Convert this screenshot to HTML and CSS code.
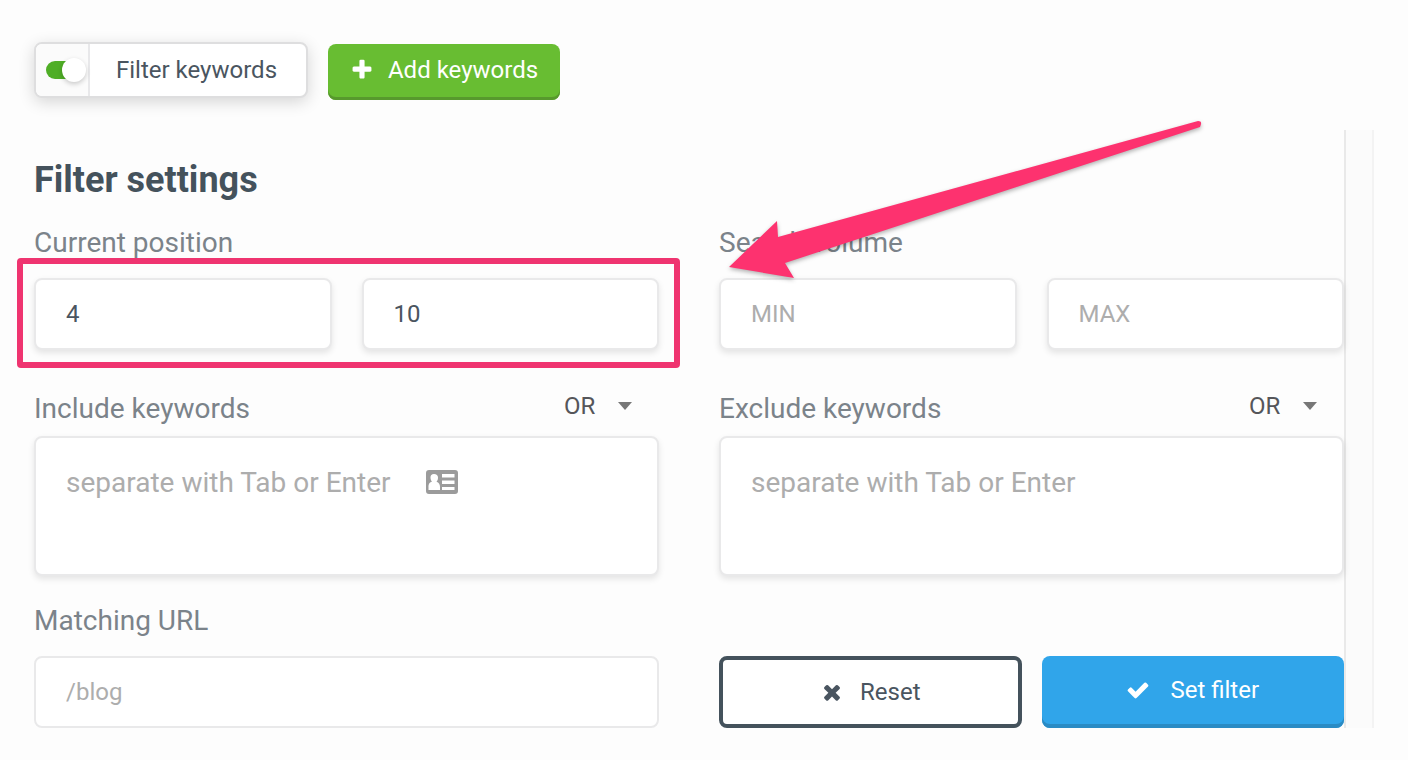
FILE: index.html
```
<!DOCTYPE html>
<html lang="en">
<head>
    <meta charset="UTF-8">
    <meta name="viewport" content="width=device-width, initial-scale=1">
    <title>Filter keywords</title>
    <link rel="stylesheet" href="styles.css">
</head>
<body>
    <div class="toolbar">
        <label class="toggle">
            <span class="toggle-cell"><input type="checkbox" class="switch" checked></span>
            <span class="toggle-text">Filter keywords</span>
        </label>
        <button type="button" class="btn btn-add">
            <svg class="icon" viewBox="0 0 1792 1792"><path d="M1600 736v192q0 40-28 68t-68 28h-416v416q0 40-28 68t-68 28h-192q-40 0-68-28t-28-68v-416h-416q-40 0-68-28t-28-68v-192q0-40 28-68t68-28h416v-416q0-40 28-68t68-28h192q40 0 68 28t28 68v416h416q40 0 68 28t28 68z"/></svg>
            Add keywords
        </button>
    </div>

    <div class="content">
        <form class="filter">
            <h2>Filter settings</h2>

            <div class="row">
                <div class="field">
                    <label for="posMin">Current position</label>
                    <div class="pair marked">
                        <input type="text" id="posMin" value="4">
                        <input type="text" id="posMax" value="10" aria-label="Current position to">
                    </div>
                </div>
                <div class="field">
                    <label for="volMin">Search volume</label>
                    <div class="pair">
                        <input type="text" id="volMin" placeholder="MIN">
                        <input type="text" id="volMax" placeholder="MAX" aria-label="Search volume to">
                    </div>
                    <svg class="arrow" viewBox="0 0 480 164" width="480" height="164"><path d="M4 149L52 103L53 119L473 3Q478 3 475 9L60 145L69 160Z"/></svg>
                </div>
            </div>

            <div class="row row-keywords">
                <div class="field">
                    <div class="field-head">
                        <label for="include">Include keywords</label>
                        <div class="mode">
                            <select aria-label="Include mode"><option>OR</option><option>AND</option></select>
                            <svg class="caret" viewBox="0 0 14 8"><path d="M0 0h14L7 8z"/></svg>
                        </div>
                    </div>
                    <div class="tags">
                        <textarea id="include" placeholder="separate with Tab or Enter"></textarea>
                        <svg class="card" viewBox="0 0 32 24">
                            <path fill-rule="evenodd" d="M3 0h26a3 3 0 0 1 3 3v18a3 3 0 0 1-3 3H3a3 3 0 0 1-3-3V3a3 3 0 0 1 3-3zM8 4C5.500 4 4.500 5.500 4.500 7.500c0 2 .8 3.500 1.500 4.200C3 12.500 2.500 14.500 2.500 17v3h11.500V17c0-2.500-1-4.500-3.500-5.300.9-.7 1.500-2.200 1.500-4.200C12 5.500 10.500 4 8 4zM16 4v3.500h12.500V4zM16 10.500V14h12.500v-3.500zM16 17v3h12.500V17z"/>
                        </svg>
                    </div>
                </div>
                <div class="field">
                    <div class="field-head">
                        <label for="exclude">Exclude keywords</label>
                        <div class="mode">
                            <select aria-label="Exclude mode"><option>OR</option><option>AND</option></select>
                            <svg class="caret" viewBox="0 0 14 8"><path d="M0 0h14L7 8z"/></svg>
                        </div>
                    </div>
                    <div class="tags">
                        <textarea id="exclude" placeholder="separate with Tab or Enter"></textarea>
                    </div>
                </div>
            </div>

            <div class="row row-last">
                <div class="field">
                    <label for="url">Matching URL</label>
                    <input type="text" id="url" class="flat" placeholder="/blog">
                </div>
                <div class="actions">
                    <button type="reset" class="btn btn-reset">
                        <svg class="icon" viewBox="0 0 1792 1792"><path d="M1490 1322q0 40-28 68l-136 136q-28 28-68 28t-68-28l-294-294-294 294q-28 28-68 28t-68-28l-136-136q-28-28-28-68t28-68l294-294-294-294q-28-28-28-68t28-68l136-136q28-28 68-28t68 28l294 294 294-294q28-28 68-28t68 28l136 136q28 28 28 68t-28 68l-294 294 294 294q28 28 28 68z"/></svg>
                        Reset
                    </button>
                    <button type="button" class="btn btn-set">
                        <svg class="icon" viewBox="0 0 1792 1792"><path d="M1671 566q0 40-28 68l-724 724-136 136q-28 28-68 28t-68-28l-136-136-362-362q-28-28-28-68t28-68l136-136q28-28 68-28t68 28l294 295 656-657q28-28 68-28t68 28l136 136q28 28 28 68z"/></svg>
                        Set filter
                    </button>
                </div>
            </div>
        </form>
        <div class="gutter"></div>
    </div>
</body>
</html>
```
FILE: styles.css
```
* {
    box-sizing: border-box;
}
body {
    margin: 0;
    padding: 42px 34px 32px;
    background: #fdfdfd;
    color: #4a5560;
    font-family: Roboto, "Liberation Sans", sans-serif;
    font-size: 24px;
}
input,
select,
textarea,
button {
    font: inherit;
    color: inherit;
}

/* toolbar */
.toolbar {
    display: flex;
    gap: 20px;
    height: 58px;
}
.toggle {
    display: flex;
    width: 274px;
    height: 56px;
    border: 2px solid #dededf;
    border-radius: 8px;
    background: #fff;
    box-shadow: 0 4px 16px rgba(0, 0, 0, 0.16);
    overflow: hidden;
    cursor: pointer;
}
.toggle-cell {
    display: flex;
    align-items: center;
    width: 54px;
    padding-left: 10px;
    background: #fbfbfb;
    border-right: 2px solid #e8e8ea;
}
.toggle-text {
    padding-left: 26px;
    line-height: 52px;
}
.switch {
    appearance: none;
    position: relative;
    width: 36px;
    height: 18px;
    margin: 0;
    border-radius: 9px;
    background: #ccc;
}
.switch:checked {
    background: #4fae26;
}
.switch::before {
    content: "";
    position: absolute;
    top: -3px;
    left: -4px;
    width: 24px;
    height: 24px;
    border-radius: 50%;
    background: #fff;
    box-shadow: 0 2px 5px rgba(0, 0, 0, 0.2);
}
.switch:checked::before {
    left: 16px;
}

/* buttons */
.btn {
    display: flex;
    align-items: center;
    justify-content: center;
    gap: 16px;
    padding: 0;
    border: 0;
    border-radius: 8px;
    cursor: pointer;
}
.icon {
    width: 24px;
    height: 24px;
    fill: currentColor;
}
.btn-add {
    align-self: flex-end;
    width: 232px;
    height: 56px;
    padding-bottom: 4px;
    gap: 14px;
    background: #68bd32;
    color: #fff;
    box-shadow: inset 0 -3px 0 #57992d;
}

/* filter */
.content {
    display: flex;
    margin-top: 30px;
}
.filter {
    flex: 1;
    padding-top: 30px;
}
.gutter {
    width: 30px;
    background: #fbfbfb;
    border-left: 2px solid #e9e9e9;
    border-right: 2px solid #f3f3f3;
}
h2 {
    margin: 0 0 24px;
    color: #44525c;
    font-size: 36px;
    line-height: 40px;
    font-weight: 700;
}
.row {
    display: grid;
    grid-template-columns: 1fr 1fr;
    gap: 60px;
}
.row-keywords {
    margin-top: 40px;
}
.row-last {
    margin-top: 26px;
}
.field {
    position: relative;
}
.field label {
    display: block;
    margin-bottom: 16px;
    font-size: 28px;
    line-height: 38px;
    color: #7b838a;
}
.pair {
    display: grid;
    grid-template-columns: 1fr 1fr;
    gap: 30px;
    position: relative;
}
.field input,
.field textarea {
    display: block;
    width: 100%;
    height: 72px;
    padding: 0 30px;
    border: 2px solid #e9e9ea;
    border-radius: 8px;
    background: #fff;
    box-shadow: 0 3px 6px rgba(0, 0, 0, 0.1);
    outline: 0;
}
.field textarea {
    height: 140px;
    padding: 26px 30px;
    font-size: 28px;
    line-height: 38px;
    resize: none;
}
.field .flat {
    box-shadow: none;
}
::placeholder {
    color: #adadad;
    opacity: 1;
}
.field-head {
    display: flex;
    justify-content: space-between;
    margin-bottom: 8px;
}
.field-head label {
    margin: 0;
}
.mode {
    position: relative;
    height: 32px;
    margin-right: 27px;
}
.mode select {
    appearance: none;
    width: 68px;
    height: 32px;
    padding: 0;
    border: 0;
    background: none;
    color: #55565a;
}
.caret {
    position: absolute;
    top: 12px;
    right: 0;
    width: 14px;
    height: 8px;
    fill: #777;
    pointer-events: none;
}
.tags {
    position: relative;
}
.card {
    position: absolute;
    top: 34px;
    left: 392px;
    width: 32px;
    height: 24px;
    fill: #9b9b9b;
}
.actions {
    display: grid;
    grid-template-columns: 1fr 1fr;
    gap: 20px;
    align-items: end;
}
.actions .btn {
    height: 72px;
}
.btn-reset {
    border: 4px solid #44525c;
    background: #fff;
}
.btn-set {
    gap: 20px;
    padding-bottom: 4px;
    background: #30a5ea;
    color: #fff;
    box-shadow: inset 0 -4px 0 #2a8bc4;
}

/* annotations */
.marked::after {
    content: "";
    position: absolute;
    top: -20px;
    right: -21px;
    bottom: -18px;
    left: -17px;
    border: 6px solid #ef3470;
    border-radius: 4px;
    pointer-events: none;
}
.arrow {
    position: absolute;
    top: -106px;
    left: 6px;
    fill: #fd326f;
    filter: drop-shadow(0 2px 2px rgba(0, 0, 0, 0.3));
    pointer-events: none;
}
```
